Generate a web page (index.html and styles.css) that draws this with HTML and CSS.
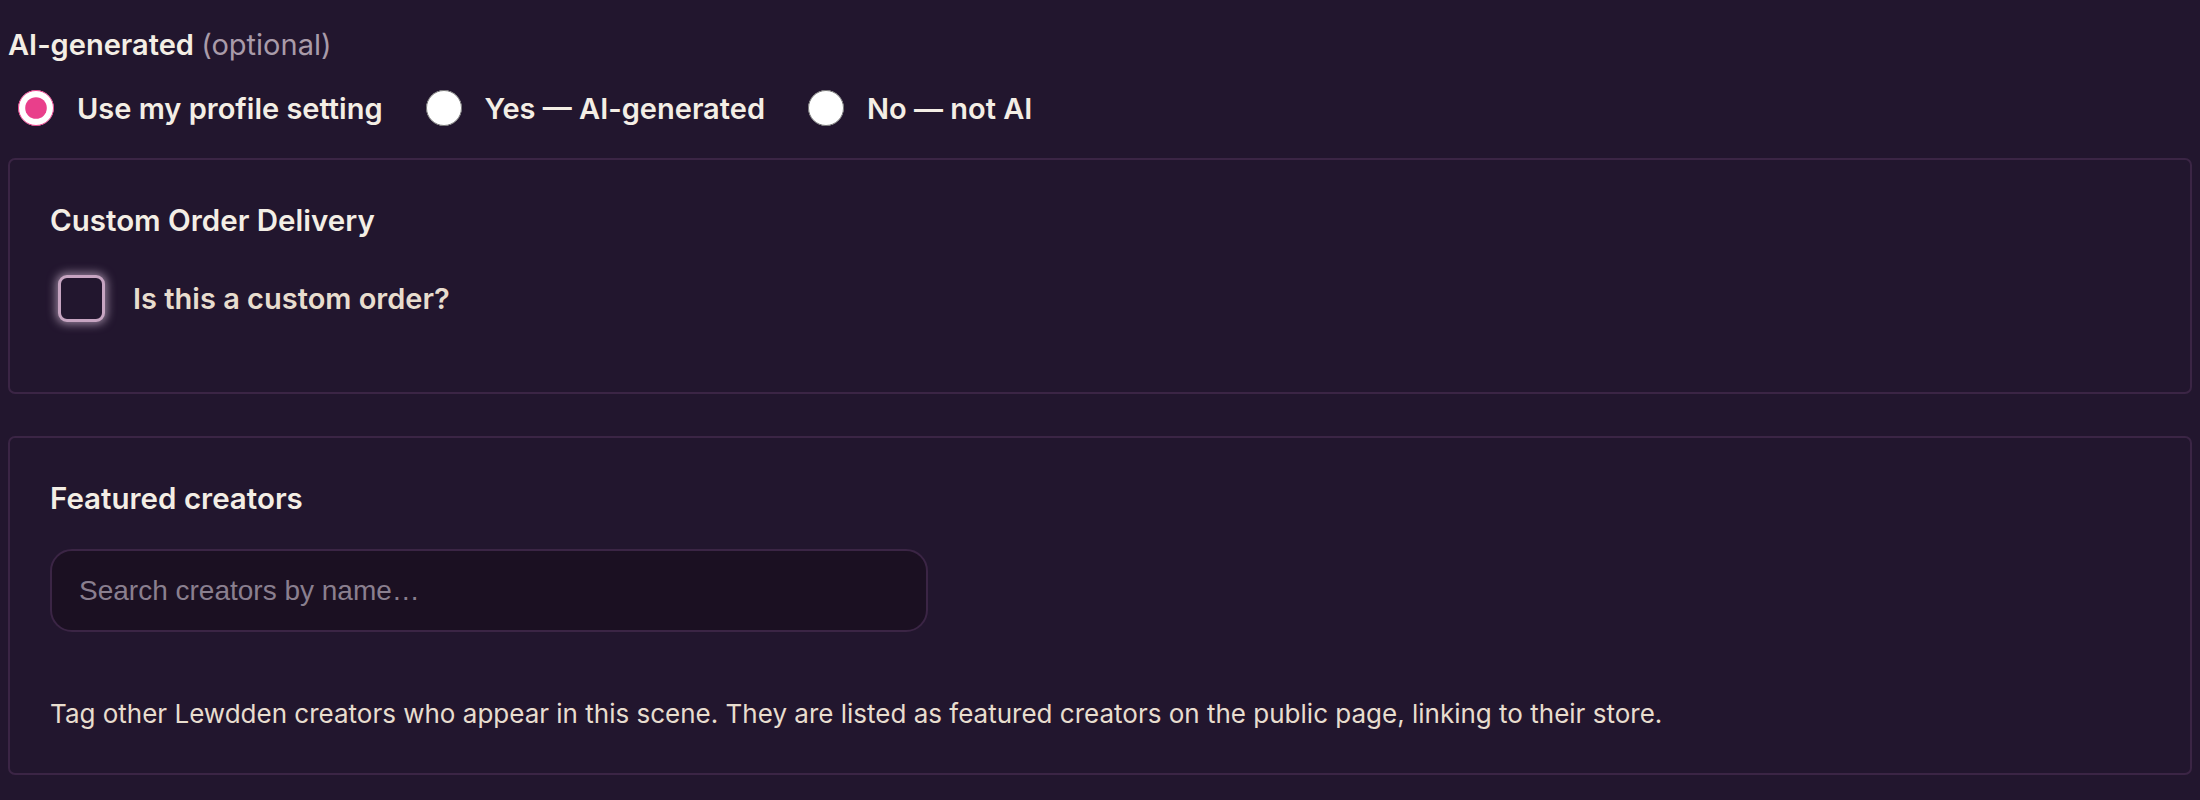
FILE: index.html
```html
<!DOCTYPE html>
<html lang="en">
<head>
<meta charset="utf-8">
<title>Scene form</title>
<link rel="stylesheet" href="styles.css">
</head>
<body>
<div class="form">
  <div class="field">
    <div class="field-label">AI-generated <span class="optional">(optional)</span></div>
    <div class="radio-row">
      <label class="radio-option"><input type="radio" name="ai" checked><span>Use my profile setting</span></label>
      <label class="radio-option"><input type="radio" name="ai"><span>Yes — AI-generated</span></label>
      <label class="radio-option"><input type="radio" name="ai"><span>No — not AI</span></label>
    </div>
  </div>

  <section class="card card-custom">
    <h3 class="card-title">Custom Order Delivery</h3>
    <label class="check-option"><input type="checkbox" class="check"><span>Is this a custom order?</span></label>
  </section>

  <section class="card card-featured">
    <h3 class="card-title">Featured creators</h3>
    <input type="text" class="search" placeholder="Search creators by name…">
    <p class="help">Tag other Lewdden creators who appear in this scene. They are listed as featured creators on the public page, linking to their store.</p>
  </section>
</div>
</body>
</html>
```

FILE: styles.css
```css
html, body {
  background: #22162e;
}
body {
  margin: 8px;
  font-family: Inter, "Noto Sans", sans-serif;
  color: #f4eee5;
}
.form {
  padding-top: 20px;
}
.field-label {
  font-size: 29px;
  line-height: 34px;
  font-weight: 600;
  color: #f4eee5;
}
.optional {
  font-weight: 400;
  color: #a99ba9;
}
.radio-row {
  display: flex;
  align-items: center;
  gap: 43px;
  margin-top: 26px;
  height: 40px;
  padding-left: 10px;
}
.radio-option {
  display: flex;
  align-items: center;
  gap: 23px;
  font-size: 29px;
  font-weight: 600;
  color: #f4eee5;
}
.radio-option input {
  width: 36px;
  height: 36px;
  margin: 0;
  accent-color: #e93f8b;
}
.card {
  border: 2px solid #3b2545;
  border-radius: 7px;
  padding: 40px 40px 40px 40px;
  margin-top: 30px;
}
.card-featured {
  margin-top: 42px;
}
.card-title {
  margin: 0;
  font-size: 29.5px;
  line-height: 40px;
  font-weight: 600;
  color: #f4eee5;
}
.check-option {
  display: flex;
  align-items: center;
  gap: 28px;
  margin-top: 35px;
  margin-bottom: 30px;
  padding-left: 8px;
  font-size: 29px;
  font-weight: 600;
  color: #e8ddce;
}
.check {
  appearance: none;
  -webkit-appearance: none;
  width: 47px;
  height: 47px;
  margin: 0;
  border: 3.5px solid #c6a4c1;
  border-radius: 9px;
  background: #22162e;
  box-shadow: 0 0 10px 2px rgba(230, 205, 230, 0.6);
}
.search {
  display: block;
  box-sizing: border-box;
  width: 878px;
  height: 83px;
  margin-top: 31px;
  padding: 0 27px;
  border: 2px solid #3b2545;
  border-radius: 22px;
  background: #1b1022;
  font-family: "Liberation Sans", Arial, sans-serif;
  font-size: 28px;
  color: #f4eee5;
  outline: none;
}
.search::placeholder {
  color: #8a7f8f;
}
.help {
  margin: 63px 0 0;
  font-size: 26px;
  line-height: 38px;
  color: #e8ddce;
}
```
